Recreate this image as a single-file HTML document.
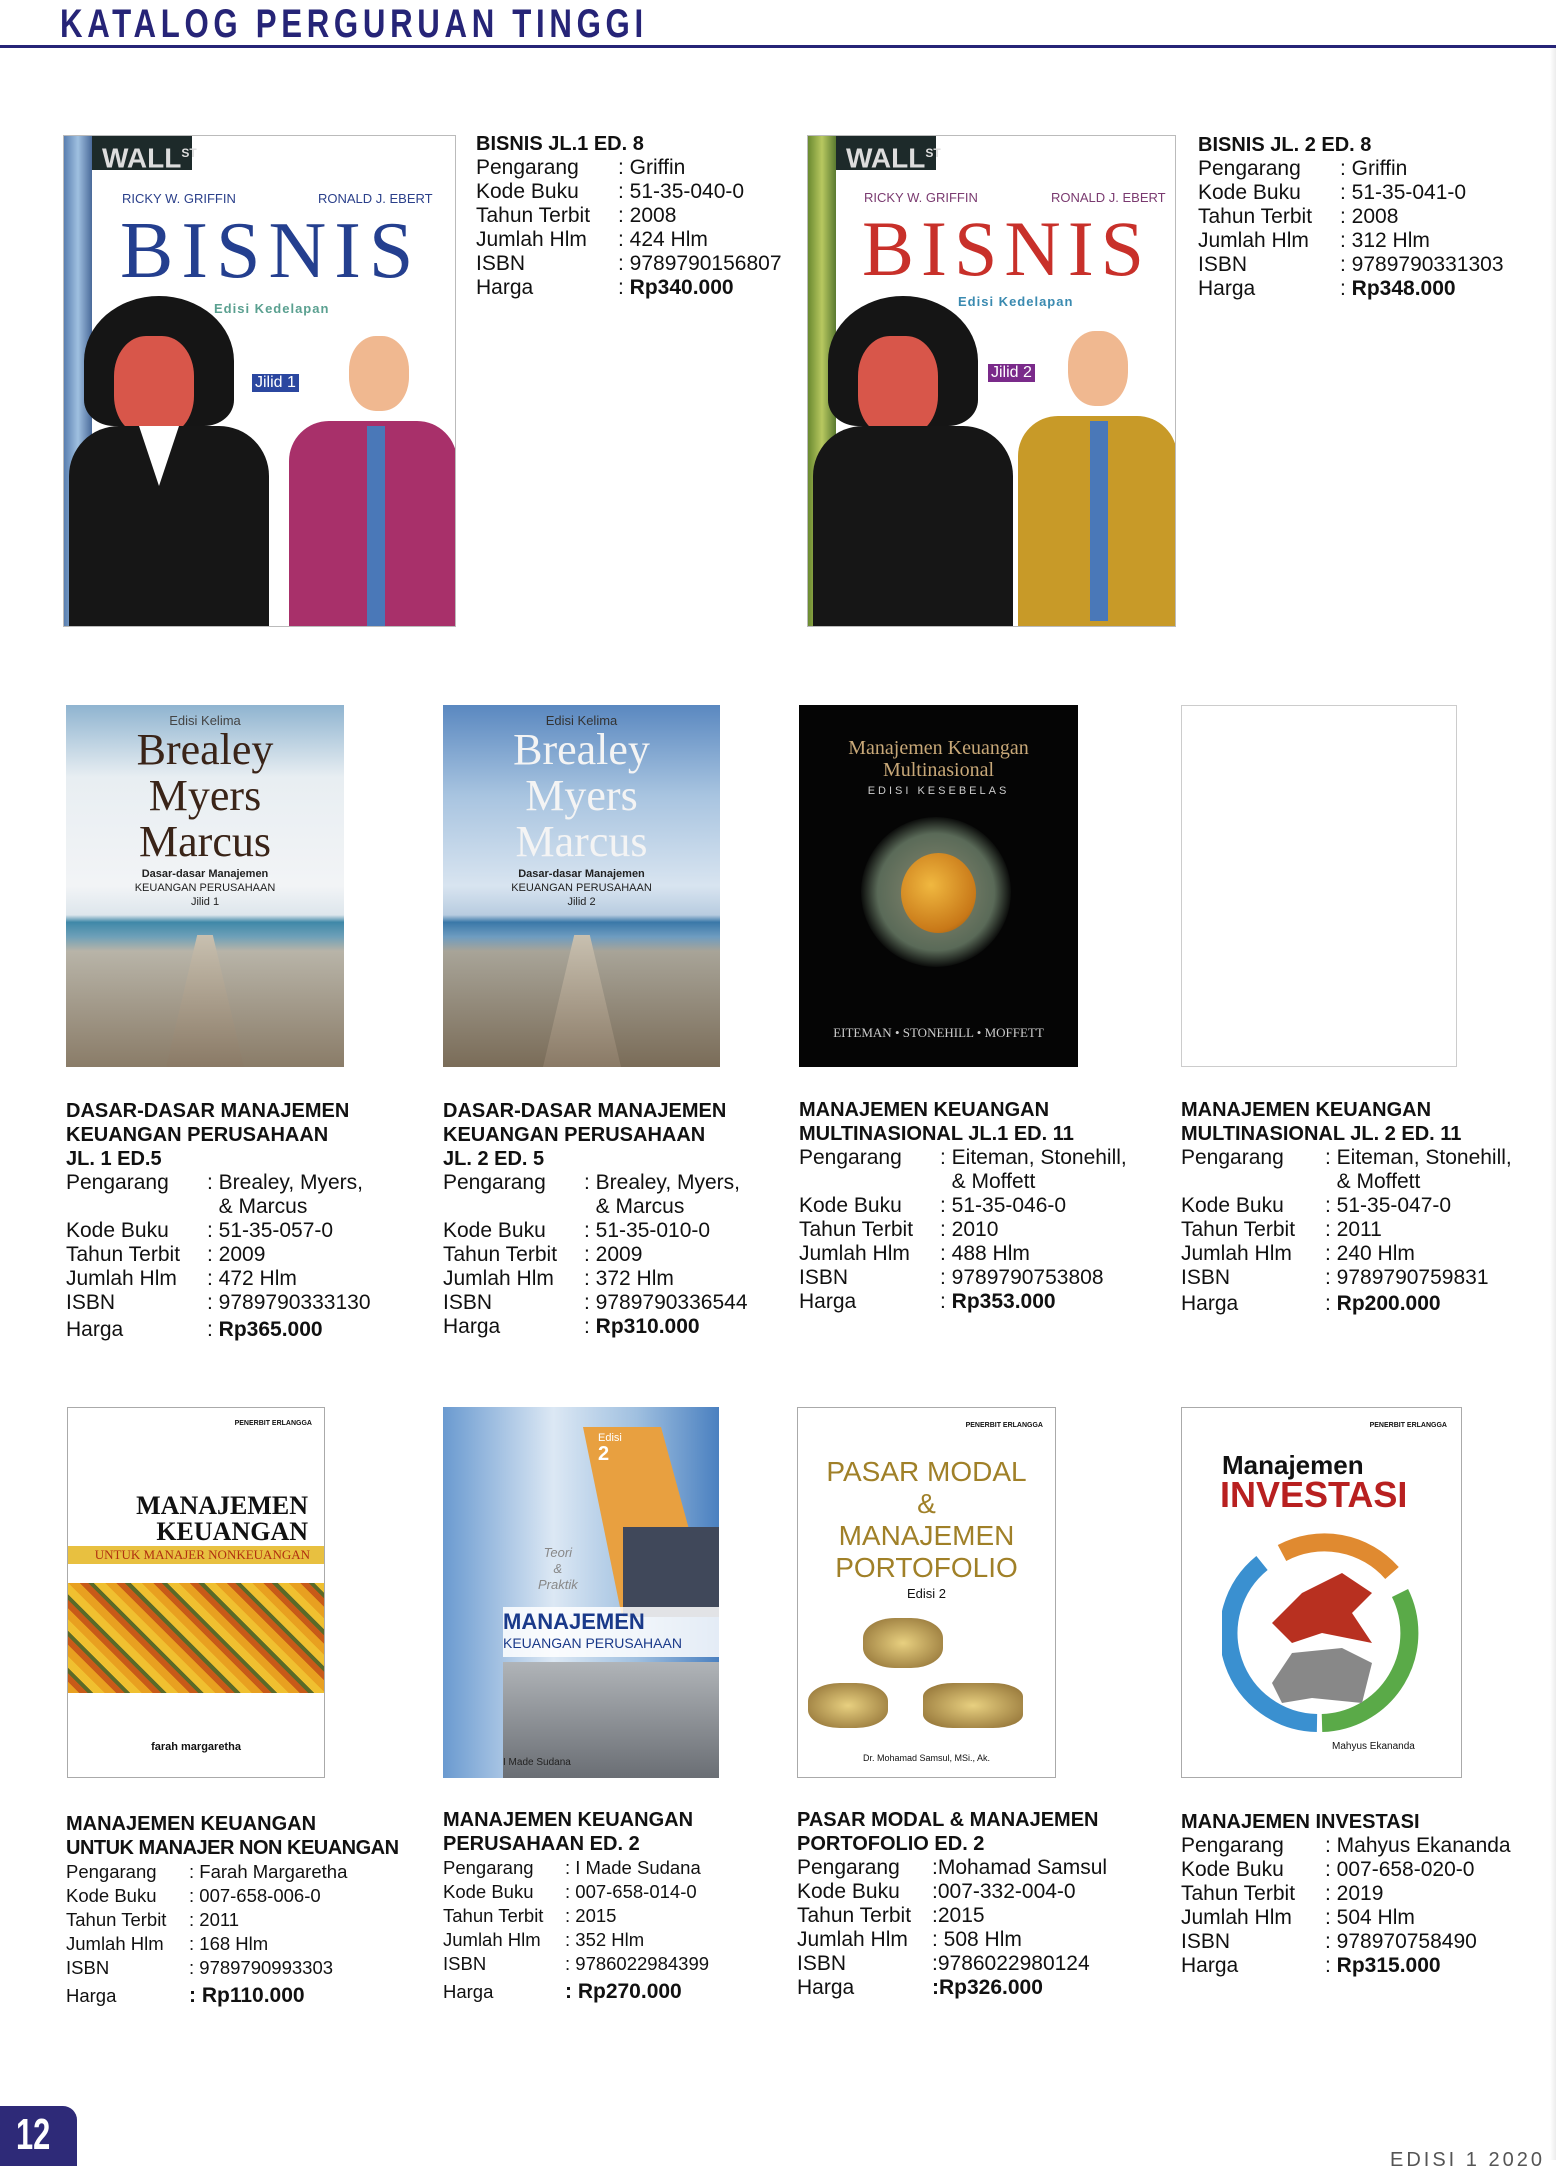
<!DOCTYPE html>
<html><head><meta charset="utf-8">
<style>
*{margin:0;padding:0;box-sizing:border-box}
body{width:1556px;height:2160px;position:relative;background:#fff;font-family:"Liberation Sans",sans-serif;color:#111;overflow:hidden}
.abs{position:absolute}
.hdr{left:60px;top:2px;font-size:40px;font-weight:bold;color:#262477;letter-spacing:6px;transform:scaleX(.78);transform-origin:left top;white-space:nowrap}
.line{left:0;top:45px;width:1556px;height:3px;background:#262477}
.info{position:absolute;font-size:21px;line-height:24px;white-space:nowrap}
.info .t{font-weight:bold;font-size:20px;line-height:24px}
.info .r span{display:inline-block}
.info .r b{font-weight:bold}
.cv{position:absolute;overflow:hidden;border:1px solid #bbb}
.small{font-size:18.5px}
</style></head><body>
<div class="abs hdr">KATALOG PERGURUAN TINGGI</div>
<div class="abs line"></div>
<div class="abs" style="right:0;top:48px;width:6px;height:2112px;background:linear-gradient(90deg,#fff,#ececec)"></div>

<!-- Row 1 covers -->
<div class="cv" style="left:63px;top:135px;width:393px;height:492px;background:#fff">
  <div class="abs" style="left:0;top:0;width:28px;height:492px;background:linear-gradient(90deg,#5a7fb0,#9fc0e0,#4a6a9a)"></div>
  <div class="abs" style="left:28px;top:0;width:100px;height:34px;background:#1d2a2a;color:#ddd;font-weight:bold;font-size:28px;line-height:34px;padding-left:10px">WALL<sup style="font-size:12px">ST</sup></div>
  <div class="abs" style="left:58px;top:55px;font-size:13px;color:#2a3f8a">RICKY W. GRIFFIN</div>
  <div class="abs" style="left:254px;top:55px;font-size:13px;color:#2a3f8a">RONALD J. EBERT</div>
  <div class="abs" style="left:56px;top:70px;font-family:'Liberation Serif',serif;font-size:80px;color:#243f8f;letter-spacing:8px">BISNIS</div>
  <div class="abs" style="left:150px;top:165px;font-size:13px;color:#5aa090;font-weight:bold;letter-spacing:1px">Edisi Kedelapan</div>
  <div class="abs" style="left:188px;top:238px;font-size:16px;color:#fff;background:#2b47a0;padding:0 3px">Jilid 1</div>
  <div class="abs" style="left:20px;top:160px;width:150px;height:130px;border-radius:50% 50% 20% 20%;background:#151515"></div>
  <div class="abs" style="left:50px;top:200px;width:80px;height:100px;border-radius:40%;background:#d8564a"></div>
  <div class="abs" style="left:5px;top:290px;width:200px;height:202px;border-radius:50px 50px 0 0;background:#161616"></div>
  <div class="abs" style="left:75px;top:290px;width:40px;height:60px;background:#fff;clip-path:polygon(0 0,100% 0,50% 100%)"></div>
  <div class="abs" style="left:285px;top:200px;width:60px;height:75px;border-radius:45%;background:#f0b890"></div>
  <div class="abs" style="left:225px;top:285px;width:168px;height:207px;border-radius:40px 40px 0 0;background:#a8306a"></div>
  <div class="abs" style="left:303px;top:290px;width:18px;height:200px;background:#4a78b8"></div>
</div>
<div class="info" style="left:476px;top:132px">
  <div class="t">BISNIS JL.1 ED. 8</div>
  <div class="r"><span style="width:142px">Pengarang</span>: Griffin</div>
  <div class="r"><span style="width:142px">Kode Buku</span>: 51-35-040-0</div>
  <div class="r"><span style="width:142px">Tahun Terbit</span>: 2008</div>
  <div class="r"><span style="width:142px">Jumlah Hlm</span>: 424 Hlm</div>
  <div class="r"><span style="width:142px">ISBN</span>: 9789790156807</div>
  <div class="r"><span style="width:142px">Harga</span>: <b>Rp340.000</b></div>
</div>

<div class="cv" style="left:807px;top:135px;width:369px;height:492px;background:#fff">
  <div class="abs" style="left:0;top:0;width:28px;height:492px;background:linear-gradient(90deg,#6a8a30,#b8c860,#5a7a30)"></div>
  <div class="abs" style="left:28px;top:0;width:100px;height:34px;background:#1d2a2a;color:#ddd;font-weight:bold;font-size:28px;line-height:34px;padding-left:10px">WALL<sup style="font-size:12px">ST</sup></div>
  <div class="abs" style="left:56px;top:54px;font-size:13px;color:#7a3a70">RICKY W. GRIFFIN</div>
  <div class="abs" style="left:243px;top:54px;font-size:13px;color:#7a3a70">RONALD J. EBERT</div>
  <div class="abs" style="left:54px;top:68px;font-family:'Liberation Serif',serif;font-size:78px;color:#c8302a;letter-spacing:7px">BISNIS</div>
  <div class="abs" style="left:150px;top:158px;font-size:13px;color:#3a8ab0;font-weight:bold;letter-spacing:1px">Edisi Kedelapan</div>
  <div class="abs" style="left:180px;top:228px;font-size:16px;color:#fff;background:#7a2a8a;padding:0 3px">Jilid 2</div>
  <div class="abs" style="left:20px;top:160px;width:150px;height:130px;border-radius:50% 50% 20% 20%;background:#151515"></div>
  <div class="abs" style="left:50px;top:200px;width:80px;height:100px;border-radius:40%;background:#d8564a"></div>
  <div class="abs" style="left:5px;top:290px;width:200px;height:202px;border-radius:50px 50px 0 0;background:#161616"></div>
  <div class="abs" style="left:260px;top:195px;width:60px;height:75px;border-radius:45%;background:#f0b890"></div>
  <div class="abs" style="left:210px;top:280px;width:159px;height:212px;border-radius:40px 40px 0 0;background:#c89a28"></div>
  <div class="abs" style="left:282px;top:285px;width:18px;height:200px;background:#4a78b8"></div>
</div>
<div class="info" style="left:1198px;top:133px">
  <div class="t">BISNIS JL. 2 ED. 8</div>
  <div class="r"><span style="width:142px">Pengarang</span>: Griffin</div>
  <div class="r"><span style="width:142px">Kode Buku</span>: 51-35-041-0</div>
  <div class="r"><span style="width:142px">Tahun Terbit</span>: 2008</div>
  <div class="r"><span style="width:142px">Jumlah Hlm</span>: 312 Hlm</div>
  <div class="r"><span style="width:142px">ISBN</span>: 9789790331303</div>
  <div class="r"><span style="width:142px">Harga</span>: <b>Rp348.000</b></div>
</div>

<!-- Row 2 covers -->
<div class="cv" style="left:66px;top:705px;width:278px;height:362px;border:none;background:linear-gradient(180deg,#8fb4d0 0%,#e8eef2 20%,#f2f4f6 50%,#dde6ec 58%,#3f88a8 60%,#6ea0b8 64%,#b8b4a8 68%,#8a7c68 100%)">
  <div class="abs" style="left:0;top:8px;width:100%;text-align:center;font-size:13px;color:#444">Edisi Kelima</div>
  <div class="abs" style="left:0;top:22px;width:100%;text-align:center;font-family:'Liberation Serif',serif;font-size:44px;line-height:46px;color:#3a2418">Brealey<br>Myers<br>Marcus</div>
  <div class="abs" style="left:0;top:162px;width:100%;text-align:center;font-size:11px;line-height:14px;color:#222"><b>Dasar-dasar Manajemen</b><br>KEUANGAN PERUSAHAAN<br>Jilid 1</div>
  <div class="abs" style="left:100px;top:230px;width:78px;height:132px;background:linear-gradient(180deg,#c8c0b0,#8a7a66);clip-path:polygon(40% 0,60% 0,100% 100%,0 100%)"></div>
</div>
<div class="cv" style="left:443px;top:705px;width:277px;height:362px;border:none;background:linear-gradient(180deg,#5a88c0 0%,#a8c4e0 25%,#d8e4f0 50%,#b8cce0 58%,#3a78a8 60%,#6e9cc0 64%,#a8a498 68%,#7a6c58 100%)">
  <div class="abs" style="left:0;top:8px;width:100%;text-align:center;font-size:13px;color:#333">Edisi Kelima</div>
  <div class="abs" style="left:0;top:22px;width:100%;text-align:center;font-family:'Liberation Serif',serif;font-size:44px;line-height:46px;color:#f4f4f4">Brealey<br>Myers<br>Marcus</div>
  <div class="abs" style="left:0;top:162px;width:100%;text-align:center;font-size:11px;line-height:14px;color:#222"><b>Dasar-dasar Manajemen</b><br>KEUANGAN PERUSAHAAN<br>Jilid 2</div>
  <div class="abs" style="left:100px;top:230px;width:78px;height:132px;background:linear-gradient(180deg,#c8c0b0,#8a7a66);clip-path:polygon(40% 0,60% 0,100% 100%,0 100%)"></div>
</div>
<div class="cv" style="left:799px;top:705px;width:279px;height:362px;border:none;background:#050505">
  <div class="abs" style="left:0;top:32px;width:100%;text-align:center;font-family:'Liberation Serif',serif;font-size:20px;line-height:22px;color:#c8a878">Manajemen Keuangan<br>Multinasional</div>
  <div class="abs" style="left:0;top:80px;width:100%;text-align:center;font-size:11px;letter-spacing:3px;color:#ccc">EDISI KESEBELAS</div>
  <div class="abs" style="left:62px;top:112px;width:150px;height:150px;border-radius:50%;background:radial-gradient(circle,#8a8a70 0%,#5a6a58 55%,#050505 72%)"></div>
  <div class="abs" style="left:102px;top:148px;width:75px;height:80px;border-radius:50%;background:radial-gradient(circle at 40% 40%,#f0b840,#c87818 70%,#7a4a10)"></div>
  <div class="abs" style="left:0;top:320px;width:100%;text-align:center;font-family:'Liberation Serif',serif;font-size:13px;color:#ccc">EITEMAN • STONEHILL • MOFFETT</div>
</div>
<div class="cv" style="left:1181px;top:705px;width:276px;height:362px;border-color:#ccc"></div>

<div class="info" style="left:66px;top:1099px">
  <div class="t">DASAR-DASAR MANAJEMEN<br>KEUANGAN PERUSAHAAN<br>JL. 1 ED.5</div>
  <div class="r"><span style="width:141px">Pengarang</span>: Brealey, Myers,</div>
  <div class="r"><span style="width:141px"></span>&nbsp;&nbsp;&amp; Marcus</div>
  <div class="r"><span style="width:141px">Kode Buku</span>: 51-35-057-0</div>
  <div class="r"><span style="width:141px">Tahun Terbit</span>: 2009</div>
  <div class="r"><span style="width:141px">Jumlah Hlm</span>: 472 Hlm</div>
  <div class="r"><span style="width:141px">ISBN</span>: 9789790333130</div>
  <div class="r" style="margin-top:3px"><span style="width:141px">Harga</span>: <b>Rp365.000</b></div>
</div>
<div class="info" style="left:443px;top:1099px">
  <div class="t">DASAR-DASAR MANAJEMEN<br>KEUANGAN PERUSAHAAN<br>JL. 2 ED. 5</div>
  <div class="r"><span style="width:141px">Pengarang</span>: Brealey, Myers,</div>
  <div class="r"><span style="width:141px"></span>&nbsp;&nbsp;&amp; Marcus</div>
  <div class="r"><span style="width:141px">Kode Buku</span>: 51-35-010-0</div>
  <div class="r"><span style="width:141px">Tahun Terbit</span>: 2009</div>
  <div class="r"><span style="width:141px">Jumlah Hlm</span>: 372 Hlm</div>
  <div class="r"><span style="width:141px">ISBN</span>: 9789790336544</div>
  <div class="r"><span style="width:141px">Harga</span>: <b>Rp310.000</b></div>
</div>
<div class="info" style="left:799px;top:1098px">
  <div class="t">MANAJEMEN KEUANGAN<br>MULTINASIONAL JL.1 ED. 11</div>
  <div class="r"><span style="width:141px">Pengarang</span>: Eiteman, Stonehill,</div>
  <div class="r"><span style="width:141px"></span>&nbsp;&nbsp;&amp; Moffett</div>
  <div class="r"><span style="width:141px">Kode Buku</span>: 51-35-046-0</div>
  <div class="r"><span style="width:141px">Tahun Terbit</span>: 2010</div>
  <div class="r"><span style="width:141px">Jumlah Hlm</span>: 488 Hlm</div>
  <div class="r"><span style="width:141px">ISBN</span>: 9789790753808</div>
  <div class="r"><span style="width:141px">Harga</span>: <b>Rp353.000</b></div>
</div>
<div class="info" style="left:1181px;top:1098px">
  <div class="t">MANAJEMEN KEUANGAN<br>MULTINASIONAL JL. 2 ED. 11</div>
  <div class="r"><span style="width:144px">Pengarang</span>: Eiteman, Stonehill,</div>
  <div class="r"><span style="width:144px"></span>&nbsp;&nbsp;&amp; Moffett</div>
  <div class="r"><span style="width:144px">Kode Buku</span>: 51-35-047-0</div>
  <div class="r"><span style="width:144px">Tahun Terbit</span>: 2011</div>
  <div class="r"><span style="width:144px">Jumlah Hlm</span>: 240 Hlm</div>
  <div class="r"><span style="width:144px">ISBN</span>: 9789790759831</div>
  <div class="r" style="margin-top:2px"><span style="width:144px">Harga</span>: <b>Rp200.000</b></div>
</div>

<!-- Row 3 covers -->
<div class="cv" style="left:67px;top:1407px;width:258px;height:371px;background:#fff;border-color:#aaa">
  <div class="abs" style="right:12px;top:12px;font-size:7px;font-weight:bold">PENERBIT ERLANGGA</div>
  <div class="abs" style="right:16px;top:85px;text-align:right;font-family:'Liberation Serif',serif;font-weight:bold;font-size:26px;line-height:26px;color:#111">MANAJEMEN<br>KEUANGAN</div>
  <div class="abs" style="left:0;top:138px;width:100%;height:18px;background:#e8c040;text-align:right;padding-right:14px;font-family:'Liberation Serif',serif;font-size:13px;color:#b03010;line-height:18px">UNTUK MANAJER NONKEUANGAN</div>
  <div class="abs" style="left:0;top:175px;width:100%;height:110px;background:repeating-linear-gradient(45deg,#e8a020 0 8px,#c85a18 8px 14px,#5a6a28 14px 18px,#f0c030 18px 26px)"></div>
  <div class="abs" style="left:0;top:333px;width:100%;text-align:center;font-size:11px;font-weight:bold">farah margaretha</div>
</div>
<div class="cv" style="left:443px;top:1407px;width:276px;height:371px;border:none;background:linear-gradient(90deg,#6a9ad0,#dce8f4 40%,#a0c0e0 70%,#4a80c0)">
  <div class="abs" style="left:140px;top:20px;width:130px;height:190px;background:#e8a040;clip-path:polygon(0 0,60% 0,100% 100%,30% 100%)"></div>
  <div class="abs" style="left:155px;top:25px;font-size:11px;color:#fff">Edisi</div>
  <div class="abs" style="left:155px;top:36px;font-size:20px;font-weight:bold;color:#fff">2</div>
  <div class="abs" style="left:180px;top:120px;width:96px;height:90px;background:#40485a"></div>
  <div class="abs" style="left:95px;top:138px;font-size:13px;font-style:italic;color:#888;text-align:center;line-height:16px">Teori<br>&amp;<br>Praktik</div>
  <div class="abs" style="left:60px;top:200px;width:216px;height:50px;background:rgba(255,255,255,.85)"></div>
  <div class="abs" style="left:60px;top:202px;font-size:22px;font-weight:bold;color:#1a3a8a">MANAJEMEN</div>
  <div class="abs" style="left:60px;top:228px;font-size:14px;color:#1a3a8a">KEUANGAN PERUSAHAAN</div>
  <div class="abs" style="left:60px;top:255px;width:216px;height:116px;background:linear-gradient(180deg,#b0b4b8,#6a6e74)"></div>
  <div class="abs" style="left:60px;top:350px;font-size:10px;color:#222">I Made Sudana</div>
</div>
<div class="cv" style="left:797px;top:1407px;width:259px;height:371px;background:#fff;border-color:#aaa">
  <div class="abs" style="right:12px;top:14px;font-size:7px;font-weight:bold">PENERBIT ERLANGGA</div>
  <div class="abs" style="left:0;top:48px;width:100%;text-align:center;font-size:28px;line-height:32px;color:#a08028;font-weight:300">PASAR MODAL<br>&amp;<br>MANAJEMEN<br>PORTOFOLIO</div>
  <div class="abs" style="left:0;top:178px;width:100%;text-align:center;font-size:13px;color:#111">Edisi 2</div>
  <div class="abs" style="left:65px;top:210px;width:80px;height:50px;border-radius:40%;background:radial-gradient(#e8d080,#8a6a30)"></div>
  <div class="abs" style="left:10px;top:275px;width:80px;height:45px;border-radius:40%;background:radial-gradient(#e8d080,#8a6a30)"></div>
  <div class="abs" style="left:125px;top:275px;width:100px;height:45px;border-radius:30%;background:radial-gradient(#e8d080,#8a6a30)"></div>
  <div class="abs" style="left:0;top:345px;width:100%;text-align:center;font-size:9px">Dr. Mohamad Samsul, MSi., Ak.</div>
</div>
<div class="cv" style="left:1181px;top:1407px;width:281px;height:371px;background:#fff;border-color:#aaa">
  <div class="abs" style="right:14px;top:14px;font-size:7px;font-weight:bold">PENERBIT ERLANGGA</div>
  <div class="abs" style="left:40px;top:42px;font-size:26px;font-weight:bold;color:#111">Manajemen</div>
  <div class="abs" style="left:38px;top:66px;font-size:36px;font-weight:bold;color:#b82020">INVESTASI</div>
  <svg class="abs" style="left:40px;top:125px" width="200" height="200" viewBox="0 0 200 200">
    <path d="M60 20 A90 90 0 0 1 170 40" fill="none" stroke="#e08a30" stroke-width="18"/>
    <path d="M178 60 A90 90 0 0 1 100 190" fill="none" stroke="#5aaa48" stroke-width="18"/>
    <path d="M95 190 A90 90 0 0 1 40 30" fill="none" stroke="#3a90d0" stroke-width="18"/>
    <path d="M50 90 L80 60 L120 40 L150 60 L130 80 L150 110 L100 100 L70 110 Z" fill="#b83020"/>
    <path d="M50 150 L70 120 L120 115 L150 130 L140 170 L90 165 L60 170 Z" fill="#888"/>
  </svg>
  <div class="abs" style="left:150px;top:333px;font-size:10px">Mahyus Ekananda</div>
</div>

<div class="info small" style="left:66px;top:1812px">
  <div class="t" style="font-size:20px">MANAJEMEN KEUANGAN<br><span style="letter-spacing:-.5px">UNTUK MANAJER NON KEUANGAN</span></div>
  <div class="r"><span style="width:123px">Pengarang</span>: Farah Margaretha</div>
  <div class="r"><span style="width:123px">Kode Buku</span>: 007-658-006-0</div>
  <div class="r"><span style="width:123px">Tahun Terbit</span>: 2011</div>
  <div class="r"><span style="width:123px">Jumlah Hlm</span>: 168 Hlm</div>
  <div class="r"><span style="width:123px">ISBN</span>: 9789790993303</div>
  <div class="r" style="margin-top:4px"><span style="width:123px">Harga</span><b style="font-size:21px">: Rp110.000</b></div>
</div>
<div class="info small" style="left:443px;top:1808px">
  <div class="t" style="font-size:20px">MANAJEMEN KEUANGAN<br>PERUSAHAAN ED. 2</div>
  <div class="r"><span style="width:122px">Pengarang</span>: I Made Sudana</div>
  <div class="r"><span style="width:122px">Kode Buku</span>: 007-658-014-0</div>
  <div class="r"><span style="width:122px">Tahun Terbit</span>: 2015</div>
  <div class="r"><span style="width:122px">Jumlah Hlm</span>: 352 Hlm</div>
  <div class="r"><span style="width:122px">ISBN</span>: 9786022984399</div>
  <div class="r" style="margin-top:4px"><span style="width:122px">Harga</span><b style="font-size:21px">: Rp270.000</b></div>
</div>
<div class="info" style="left:797px;top:1808px">
  <div class="t">PASAR MODAL &amp; MANAJEMEN<br>PORTOFOLIO ED. 2</div>
  <div class="r"><span style="width:135px">Pengarang</span>:Mohamad Samsul</div>
  <div class="r"><span style="width:135px">Kode Buku</span>:007-332-004-0</div>
  <div class="r"><span style="width:135px">Tahun Terbit</span>:2015</div>
  <div class="r"><span style="width:135px">Jumlah Hlm</span>: 508 Hlm</div>
  <div class="r"><span style="width:135px">ISBN</span>:9786022980124</div>
  <div class="r"><span style="width:135px">Harga</span><b>:Rp326.000</b></div>
</div>
<div class="info" style="left:1181px;top:1810px">
  <div class="t">MANAJEMEN INVESTASI</div>
  <div class="r"><span style="width:144px">Pengarang</span>: Mahyus Ekananda</div>
  <div class="r"><span style="width:144px">Kode Buku</span>: 007-658-020-0</div>
  <div class="r"><span style="width:144px">Tahun Terbit</span>: 2019</div>
  <div class="r"><span style="width:144px">Jumlah Hlm</span>: 504 Hlm</div>
  <div class="r"><span style="width:144px">ISBN</span>: 978970758490</div>
  <div class="r"><span style="width:144px">Harga</span>: <b>Rp315.000</b></div>
</div>

<div class="abs" style="left:0;top:2106px;width:77px;height:60px;background:#2e2a78;border-radius:0 14px 0 0"></div>
<div class="abs" style="left:16px;top:2110px;font-size:44px;font-weight:bold;color:#fff;transform:scaleX(.7);transform-origin:left top">12</div>
<div class="abs" style="left:1390px;top:2149px;font-size:20px;color:#555;letter-spacing:3px">EDISI 1 2020</div>
</body></html>
